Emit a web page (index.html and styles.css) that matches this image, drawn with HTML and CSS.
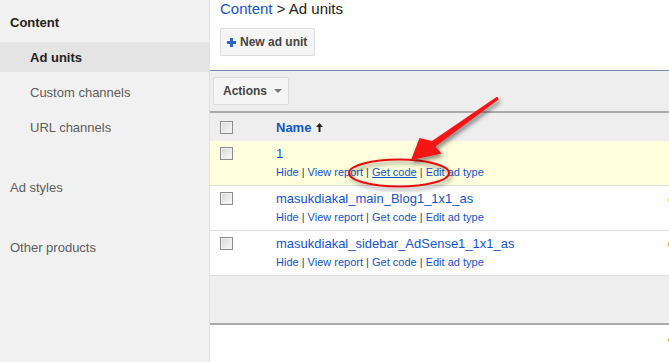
FILE: index.html
```html
<!DOCTYPE html>
<html>
<head>
<meta charset="utf-8">
<link rel="stylesheet" href="styles.css">
</head>
<body>
<div class="page">
  <aside class="sidebar">
    <div class="nav-head">Content</div>
    <div class="nav-item active">Ad units</div>
    <div class="nav-item">Custom channels</div>
    <div class="nav-item">URL channels</div>
    <div class="nav-section">Ad styles</div>
    <div class="nav-section">Other products</div>
  </aside>
  <main class="main">
    <div class="top">
      <div class="crumb"><a href="#">Content</a> &gt; Ad units</div>
      <button class="btn btn-new">
        <svg class="plus" width="9" height="9" viewBox="0 0 9 9"><path d="M3 0h3v3h3v3H6v3H3V6H0V3h3z" fill="#2f66c4"/></svg>
        <span>New ad unit</span>
      </button>
    </div>
    <div class="toolbar">
      <button class="btn btn-actions">
        <span>Actions</span>
        <svg class="caret" width="8" height="4" viewBox="0 0 8 4"><path d="M0 0h8L4 4z" fill="#777"/></svg>
      </button>
    </div>
    <div class="table">
      <div class="row head">
        <div class="cell-cb"><span class="cb"></span></div>
        <div class="cell-name"><span class="th">Name</span>
          <svg class="sort" width="7" height="9" viewBox="0 0 7 9"><path d="M3.5 0L7 4H4.5v5h-2V4H0z" fill="#222"/></svg>
        </div>
        <div></div>
      </div>
      <div class="row sel">
        <div class="cell-cb"><span class="cb"></span></div>
        <div class="cell-name">
          <a class="name" href="#">1</a>
          <div class="links"><a href="#">Hide</a> | <a href="#">View report</a> | <a class="u" href="#">Get code</a> | <a href="#">Edit ad type</a></div>
        </div>
        <div></div>
      </div>
      <div class="row">
        <div class="cell-cb"><span class="cb"></span></div>
        <div class="cell-name">
          <a class="name" href="#">masukdiakal_main_Blog1_1x1_as</a>
          <div class="links"><a href="#">Hide</a> | <a href="#">View report</a> | <a href="#">Get code</a> | <a href="#">Edit ad type</a></div>
        </div>
        <div class="cell-status"><span class="mark m1"></span></div>
      </div>
      <div class="row">
        <div class="cell-cb"><span class="cb"></span></div>
        <div class="cell-name">
          <a class="name" href="#">masukdiakal_sidebar_AdSense1_1x1_as</a>
          <div class="links"><a href="#">Hide</a> | <a href="#">View report</a> | <a href="#">Get code</a> | <a href="#">Edit ad type</a></div>
        </div>
        <div class="cell-status"><span class="mark m2"></span></div>
      </div>
    </div>
    <div class="footer-bar"></div>
    <div class="below"><span class="mark m3"></span></div>
  </main>
  <svg class="annot" width="669" height="362" viewBox="0 0 669 362">
    <defs>
      <filter id="sh" x="-20%" y="-20%" width="140%" height="140%">
        <feDropShadow dx="2" dy="3" stdDeviation="2" flood-color="#000" flood-opacity="0.45"/>
      </filter>
      <linearGradient id="rg" x1="0" y1="0" x2="1" y2="1">
        <stop offset="0" stop-color="#ff2a2a"/>
        <stop offset="1" stop-color="#e80000"/>
      </linearGradient>
    </defs>
    <ellipse cx="399" cy="173" rx="50" ry="13.5" fill="none" stroke="#e51010" stroke-width="2" filter="url(#sh)"/>
    <path d="M496.5 97 L432 141 L419.5 138 L411 160 L441.5 153.5 L435.5 146.5 L498.5 99.5 Q498.5 96.5 496.5 97 Z" fill="url(#rg)" filter="url(#sh)"/>
  </svg>
</div>
</body>
</html>
```
FILE: styles.css
```css
* { box-sizing: border-box; margin: 0; padding: 0; }
html, body { width: 669px; height: 362px; overflow: hidden; }
body { font-family: "Liberation Sans", Arial, sans-serif; background: #fff; }

.page { display: flex; height: 362px; position: relative; }

.sidebar { width: 210px; flex: none; background: #f1f1f1; border-right: 1px solid #e2e2e2; padding-top: 7px; }
.nav-head { height: 30px; line-height: 30px; padding: 1px 0 0 10px; font-size: 13px; font-weight: bold; color: #222; }
.nav-item { height: 30px; line-height: 30px; padding: 1px 0 0 30px; margin-top: 5px; font-size: 13px; color: #5c5c5c; }
.nav-item.active { background: #e4e4e4; font-weight: bold; color: #222; }
.nav-section { height: 30px; line-height: 30px; padding: 1px 0 0 10px; margin-top: 30px; font-size: 13px; color: #5c5c5c; }

.main { flex: 1; min-width: 0; display: flex; flex-direction: column; }
.top { padding-left: 10px; }
.crumb { font-size: 15px; line-height: 17px; color: #222; white-space: nowrap; }
.crumb a { color: #1155cc; text-decoration: none; }

.btn { display: inline-flex; align-items: center; height: 28px; border: 1px solid #dcdcdc; border-radius: 2px; background: #f5f5f5; font-family: "Liberation Sans", Arial, sans-serif; font-size: 12px; font-weight: bold; color: #444; }
.btn-new { margin-top: 11px; padding: 0 7px 0 6px; gap: 4px; }
.btn-actions { padding: 0 6px 0 9px; gap: 7px; }

.toolbar { margin-top: 14px; border-top: 1px solid #7d8fb3; background: #eee; padding: 6px 3px; border-bottom: 2px solid #aaa; }

.row { display: grid; grid-template-columns: 66px 392px 1fr; height: 45px; border-bottom: 1px solid #ddd; }
.row.head { height: 28px; background: #eee; border-bottom: 0; align-items: center; }
.row.sel { background: #ffffdd; }
.cell-cb { padding-left: 10px; }
.row:not(.head) .cell-cb { padding-top: 6px; }
.head .cell-cb { display: flex; align-items: center; }
.cb { display: block; width: 13px; height: 13px; border: 1px solid #8c8c8c; background: linear-gradient(135deg, #d6d6d6, #fafafa); box-shadow: inset 0 0 0 1px #f0f0f0; }

.cell-name { padding-top: 5px; white-space: nowrap; }
.head .cell-name { padding-top: 0; display: flex; align-items: center; gap: 5px; }
.th { font-size: 13px; font-weight: bold; color: #1155cc; }
.name { display: block; font-size: 13px; line-height: 16px; color: #1155cc; text-decoration: none; }
.links { margin-top: 3px; font-size: 11px; line-height: 14px; color: #444; }
.links a { color: #1155cc; text-decoration: none; }
.links a.u { text-decoration: underline; }

.cell-status { position: relative; }
.mark { display: block; background: #f0a020; width: 4px; }
.m1 { height: 2px; margin-top: 13px; }
.m2 { height: 5px; margin-top: 11px; background: #f5b040; }
.m3 { height: 2px; margin-top: 14px; margin-left: 458px; }

.footer-bar { height: 49px; background: #eee; border-bottom: 2px solid #aaa; }

.annot { position: absolute; left: 0; top: 0; pointer-events: none; }
```
